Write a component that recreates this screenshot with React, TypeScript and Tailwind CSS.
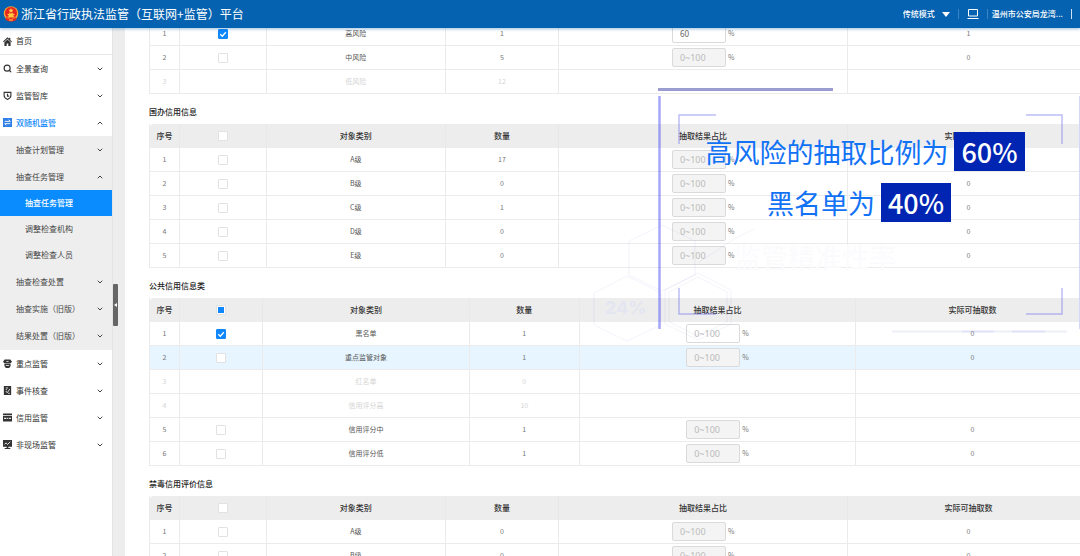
import { ReactNode, useState } from "react"
import clsx from "clsx"
import { ChevronDown, ChevronUp, Search } from "lucide-react"

type RowData = {
	name: string
	count: number
	checked?: boolean
	disabled?: boolean
	hovered?: boolean
	editable?: boolean
	ratio?: string
	actual?: number
}

type CreditTableProps = {
	title?: string
	rows: RowData[]
	wide?: boolean
	partial?: boolean
}

const RISK_ROWS: RowData[] = [
	{ name: "高风险", count: 1, checked: true, editable: true, ratio: "60", actual: 1 },
	{ name: "中风险", count: 5 },
	{ name: "低风险", count: 12, disabled: true },
]

const NATIONAL_ROWS: RowData[] = [
	{ name: "A级", count: 17 },
	{ name: "B级", count: 0 },
	{ name: "C级", count: 1 },
	{ name: "D级", count: 0 },
	{ name: "E级", count: 0 },
]

const PUBLIC_ROWS: RowData[] = [
	{ name: "黑名单", count: 1, checked: true, editable: true },
	{ name: "重点监管对象", count: 1, hovered: true },
	{ name: "红名单", count: 0, disabled: true },
	{ name: "信用评分高", count: 10, disabled: true },
	{ name: "信用评分中", count: 1 },
	{ name: "信用评分低", count: 1 },
]

const DRUG_ROWS: RowData[] = [
	{ name: "A级", count: 0 },
	{ name: "B级", count: 0 },
]

const Emblem = () => (
	<svg viewBox="0 0 32 32" className="h-4 w-4 shrink-0">
		<circle cx="16" cy="15" r="14.500" fill="#f2a33a" />
		<circle cx="16" cy="14" r="12" fill="#e8251c" />
		<path d="M16 4l1.500 3.400 3.600.3-2.700 2.400.8 3.500-3.200-1.900-3.200 1.900.8-3.500-2.700-2.400 3.600-.3z" fill="#ffd34d" />
		<path d="M9 16h14v2h-2v3h2v2H9v-2h2v-3H9zM12 14h8l1 1.500H11z" fill="#ffc63f" />
		<path d="M6 23c3 2 5 3 10 3s7-1 10-3l1 4c-3 3-7 4-11 4S8 30 5 27z" fill="#e8251c" />
		<path d="M12 27h8v2h-8z" fill="#ffd34d" />
	</svg>
)

const HomeIcon = () => (
	<svg viewBox="0 0 16 16" className="h-[9px] w-[9px]" fill="currentColor">
		<path d="M8 .5L0 8l1.300 1.300L8 3l6.700 6.300L16 8l-3-2.800V1.500h-2v1.800z" />
		<path d="M2.500 9.500L8 4.500l5.500 5V16h-4v-4.500h-3V16h-4z" />
	</svg>
)

const ShieldIcon = () => (
	<svg viewBox="0 0 16 16" className="h-[9px] w-[9px]" fill="none" stroke="currentColor" strokeWidth="2">
		<path d="M2 2.500h12v6c0 3-2.500 5-6 6.500-3.500-1.500-6-3.500-6-6.500z" />
		<path d="M8 5v4h3" />
	</svg>
)

const SwapIcon = () => (
	<svg viewBox="0 0 16 16" className="h-[9px] w-[9px]">
		<path d="M0 0h16v16H0z" fill="#2f7fe8" />
		<path d="M3 6h10L10 3M13 10H3l3 3" fill="none" stroke="#fff" strokeWidth="1.600" />
	</svg>
)

const HatIcon = () => (
	<svg viewBox="0 0 16 16" className="h-[9px] w-[9px]" fill="currentColor">
		<path d="M3 1h10l3 4-3 3H3L0 5z" />
		<path d="M2.500 9h11v3.500L11 16H5l-2.500-3.500z" />
		<path d="M6 4h4v1.500H6zM5 11h6v1.500H5z" fill="#fff" />
	</svg>
)

const NoteIcon = () => (
	<svg viewBox="0 0 16 16" className="h-[9px] w-[9px]">
		<path d="M1.500 0h13v16h-13z" fill="currentColor" />
		<path d="M5 3.500h4M5 6.500h2M5 9l2.500 3L12 5.500M9 13h3" fill="none" stroke="#fff" strokeWidth="1.400" />
	</svg>
)

const CardIcon = () => (
	<svg viewBox="0 0 16 16" className="h-[9px] w-[9px]" fill="currentColor">
		<path d="M0 1h16v3H0zM0 5.500h16V15H0z" />
		<path d="M2 8.500h4v2H2zM7.500 8.500h2v2h-2zM11 8.500h3v2h-3z" fill="#fff" />
	</svg>
)

const ScreenIcon = () => (
	<svg viewBox="0 0 16 16" className="h-[9px] w-[9px]">
		<path d="M0 0h16v12H9.500v2H13v2H3v-2h3.500v-2H0z" fill="currentColor" />
		<path d="M2.500 8l3-3 2.500 3 5-5" fill="none" stroke="#fff" strokeWidth="1.500" />
	</svg>
)

const Arrow = ({ open }: { open?: boolean }) =>
	open ? (
		<ChevronUp className="ml-auto h-2 w-2" strokeWidth={3} />
	) : (
		<ChevronDown className="ml-auto h-2 w-2" strokeWidth={3} />
	)

type MenuItemProps = { icon: ReactNode; label: string; open?: boolean; leaf?: boolean }

const MenuItem = ({ icon, label, open, leaf }: MenuItemProps) => (
	<button
		className={clsx(
			"flex h-[27px] w-full items-center gap-1 pr-2 pl-[3px]",
			open ? "font-medium text-[#1088fc]" : "text-[#333]",
			leaf && "border-b border-[#e8e8e8]",
		)}>
		{icon}
		<span>{label}</span>
		{!leaf && (
			<span className="ml-auto text-[#444]">
				<Arrow open={open} />
			</span>
		)}
	</button>
)

const SubItem = ({ label, open }: { label: string; open?: boolean }) => (
	<button className="flex h-[27px] w-full items-center pr-2 pl-4">
		<span>{label}</span>
		<Arrow open={open} />
	</button>
)

const LeafItem = ({ label, active }: { label: string; active?: boolean }) => (
	<a
		href="#"
		className={clsx("flex h-[26px] items-center pl-[25px]", active && "bg-[#0a8cff] font-medium text-white")}>
		{label}
	</a>
)

const Sidebar = () => (
	<nav className="w-28 shrink-0 bg-white text-[8px] text-[#444]">
		<MenuItem icon={<HomeIcon />} label="首页" leaf />
		<MenuItem icon={<Search className="h-[9px] w-[9px]" strokeWidth={3} />} label="全景查询" />
		<MenuItem icon={<ShieldIcon />} label="监管智库" />
		<MenuItem icon={<SwapIcon />} label="双随机监管" open />
		<div className="bg-[#eeeeee] pb-px">
			<SubItem label="抽查计划管理" />
			<SubItem label="抽查任务管理" open />
			<LeafItem label="抽查任务管理" active />
			<LeafItem label="调整检查机构" />
			<LeafItem label="调整检查人员" />
			<SubItem label="抽查检查处置" />
			<SubItem label="抽查实施（旧版）" />
			<SubItem label="结果处置（旧版）" />
		</div>
		<MenuItem icon={<HatIcon />} label="重点监管" />
		<MenuItem icon={<NoteIcon />} label="事件核查" />
		<MenuItem icon={<CardIcon />} label="信用监管" />
		<MenuItem icon={<ScreenIcon />} label="非现场监管" />
	</nav>
)

type TickProps = { label: string; checked?: boolean; partial?: boolean; onChange: () => void }

const Tick = ({ label, checked = false, partial, onChange }: TickProps) => (
	<span className="relative mx-auto flex h-[10px] w-[10px]">
		<input
			type="checkbox"
			aria-label={label}
			checked={checked}
			onChange={onChange}
			className="h-[10px] w-[10px] appearance-none rounded-[1px] border border-[#e2e2e2] bg-white checked:border-[#1088fc] checked:bg-[#1088fc]"
		/>
		{checked && (
			<svg viewBox="0 0 10 10" className="pointer-events-none absolute inset-0 h-[10px] w-[10px]">
				<path d="M2.300 5.200l2 2 3.500-4" fill="none" stroke="#fff" strokeWidth="1.300" />
			</svg>
		)}
		{partial && !checked && <span className="pointer-events-none absolute inset-[2px] bg-[#1088fc]" />}
	</span>
)

const CreditTable = ({ title, rows, wide, partial }: CreditTableProps) => {
	const [selected, setSelected] = useState(rows.map((r) => !!r.checked))
	const [all, setAll] = useState(false)

	const toggle = (i: number) => setSelected(selected.map((s, n) => (n === i ? !s : s)))

	return (
		<section>
			{title && (
				<h2 className="flex h-[30px] items-center pt-[5px] text-[8px] font-medium text-[#222]">{title}</h2>
			)}
			<table className="w-full table-fixed border-separate border-spacing-0 border-l border-[#ebebeb] text-center text-[7px] text-[#777]">
				<colgroup>
					<col className="w-[30px]" />
					<col className={wide ? "w-[83px]" : "w-[87px]"} />
					<col className={wide ? "w-[22%]" : "w-[19%]"} />
					<col className={wide ? "w-[11.7%]" : "w-[12.1%]"} />
					<col className={wide ? "w-[29.4%]" : "w-[30.7%]"} />
					<col />
				</colgroup>
				{title && (
					<thead className="bg-[#ededed] text-[8px] text-[#333]">
						<tr className="h-6 *:border-r *:border-[#e8e8e8] *:p-0 *:font-medium">
							<th className="rounded-tl-sm">序号</th>
							<th>
								<Tick label="全选" checked={all} partial={partial} onChange={() => setAll(!all)} />
							</th>
							<th>对象类别</th>
							<th>数量</th>
							<th>抽取结果占比</th>
							<th>实际可抽取数</th>
						</tr>
					</thead>
				)}
				<tbody>
					{rows.map((row, i) => (
						<tr
							key={row.name}
							className={clsx(
								"h-6 *:border-r *:border-b *:border-[#ebebeb] *:p-0",
								row.hovered && "bg-[#e6f5ff]",
								row.disabled && "text-[#d4d4d4]",
							)}>
							<td>{i + 1}</td>
							<td>
								{!row.disabled && (
									<Tick label={row.name} checked={selected[i]} onChange={() => toggle(i)} />
								)}
							</td>
							<td className={row.disabled ? "" : "text-[#555]"}>{row.name}</td>
							<td>{row.count}</td>
							<td>
								{!row.disabled && (
									<label className="flex items-center justify-center gap-[2px]">
										<input
											type="text"
											aria-label={`${row.name}抽取结果占比`}
											defaultValue={row.ratio}
											placeholder="0~100"
											disabled={!row.editable}
											className="h-[19px] w-[54px] rounded-[2px] border border-[#dadada] bg-white pl-[7px] font-['Noto_Sans',sans-serif] text-[8px] text-[#666] placeholder:text-[9px] placeholder:text-[#bbb] disabled:bg-[#f4f4f4]"
										/>
										<span>%</span>
									</label>
								)}
							</td>
							<td>{!row.disabled && (row.actual ?? 0)}</td>
						</tr>
					))}
				</tbody>
			</table>
		</section>
	)
}

const TopBar = () => (
	<header className="relative z-10 flex h-7 shrink-0 items-center bg-[#0562b0] pr-2 pl-[3px] text-white shadow-[0_1px_3px_rgba(5,98,176,0.4)]">
		<Emblem />
		<h1 className="ml-[2px] text-[12px]">浙江省行政执法监管（互联网+监管）平台</h1>
		<div className="ml-auto flex items-center gap-2 text-[8px] font-medium">
			<div className="relative flex items-center">
				<select aria-label="模式" className="w-[47px] appearance-none bg-transparent outline-none">
					<option>传统模式</option>
				</select>
				<svg viewBox="0 0 8 5" className="pointer-events-none absolute right-0 h-[5px] w-2">
					<path d="M0 0h8L4 5z" fill="#fff" />
				</svg>
			</div>
			<span className="h-[10px] w-px bg-[#3a86c6]" />
			<button aria-label="大屏">
				<svg viewBox="0 0 12 10" className="h-[10px] w-3" fill="none" stroke="#fff">
					<path d="M1.500.5h9v6.500h-9zM.5 9.500h11" />
				</svg>
			</button>
			<span className="h-[10px] w-px bg-[#3a86c6]" />
			<span className="-ml-1">温州市公安局龙湾...</span>
			<span className="h-[10px] w-px bg-[#cfe0f0]" />
		</div>
	</header>
)

const Caption = ({ text, value }: { text: string; value: string }) => (
	<p className="flex items-center gap-[6px]">
		<span className="text-[#1272f5]">{text}</span>
		<span className="flex h-[39px] items-center bg-[#0025b3] px-[7px] font-medium text-white">{value}</span>
	</p>
)

// Caption layer floating above the tables
const CaptionLayer = () => (
	<div className="pointer-events-none absolute top-[88px] right-0 z-20 w-[488px]">
		<svg viewBox="0 0 488 254" className="h-[254px] w-[488px]" fill="none">
			<g stroke="#6464c8" strokeOpacity=".08">
				<path d="M70 137l33 16v34l-33 16-33-16v-34z" />
				<path d="M35 188l34 17v32l-34 16-33-16v-32z" />
				<path d="M106 185l33 17v34l-33 16-33-16v-34z" />
				<path d="M106 189l29 15v30l-29 14-29-14v-30z" />
				<path d="M106 175l36-24 20-10" />
			</g>
			<text x="13" y="226" fontSize="18" fontWeight="700" fill="#e3e5f1" fontFamily="Inter, sans-serif">
				24%
			</text>
			<text x="142" y="180" fontSize="27" fill="#fbfbfd" fontFamily="'Noto Sans CJK SC', sans-serif">
				监管精准性率
			</text>
			<path d="M66 1.500h175" stroke="#9b9ccf" strokeWidth="3" />
			<path d="M67.500 8v233" stroke="#5050f5" strokeOpacity=".5" strokeWidth="2.500" />
			<path d="M487.500 8v233" stroke="#d6d6f8" />
			<path
				d="M87 56V27h37M434 27h36v29M87 200v26h37M434 226h36v-26"
				stroke="#6a6af0"
				strokeOpacity=".45"
				strokeWidth="1.500"
			/>
			<path d="M300 243.500h175" stroke="#5a64b4" strokeOpacity=".1" strokeWidth="2" />
			<path d="M370 243.500h32M420 243.500h33" stroke="#5a78f0" strokeOpacity=".1" strokeWidth="2" />
		</svg>
		<div className="absolute inset-x-0 top-11 flex flex-col items-center gap-3 pl-[58px] text-[27px] leading-none">
			<Caption text="高风险的抽取比例为" value="60%" />
			<div className="pr-3">
				<Caption text="黑名单为" value="40%" />
			</div>
		</div>
	</div>
)

export default function App() {
	return (
		<div className="relative flex h-screen flex-col overflow-hidden bg-white font-['Noto_Sans_CJK_SC',sans-serif]">
			<TopBar />
			<div className="flex min-h-0 flex-1">
				<Sidebar />
				<div className="flex w-[13px] shrink-0 items-center border-l border-[#e4e4e4] bg-[#ededed] pt-[26px]">
					<button
						aria-label="收起菜单"
						className="flex h-[42px] w-[5px] items-center justify-center rounded-[1px] bg-[#666]">
						<svg viewBox="0 0 3 4" className="h-1 w-[3px]">
							<path d="M3 0v4L0 2z" fill="#fff" />
						</svg>
					</button>
				</div>
				<main className="min-w-0 flex-1 overflow-hidden pl-6">
					<div className="-mt-[6px] -mr-[10px]">
						<CreditTable rows={RISK_ROWS} />
						<CreditTable title="国办信用信息" rows={NATIONAL_ROWS} />
						<CreditTable title="公共信用信息类" rows={PUBLIC_ROWS} wide partial />
						<CreditTable title="禁毒信用评价信息" rows={DRUG_ROWS} />
					</div>
				</main>
			</div>
			<CaptionLayer />
		</div>
	)
}
